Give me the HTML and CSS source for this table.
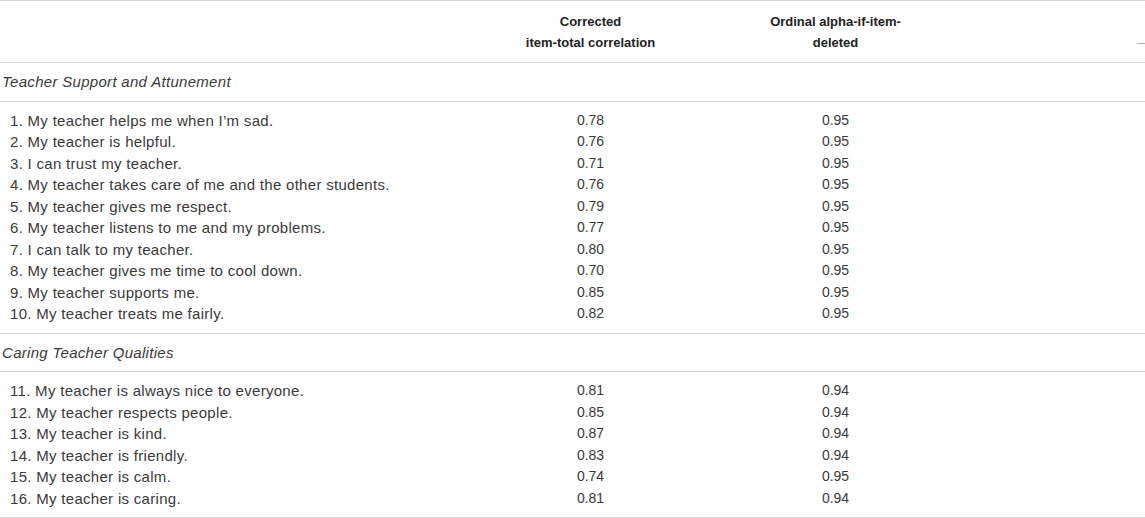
FILE: index.html
```html
<!DOCTYPE html>
<html lang="en">
<head>
<meta charset="utf-8">
<title>Item statistics</title>
<link rel="stylesheet" href="styles.css">
</head>
<body>
<div class="table">
  <div class="row head">
    <div class="c1"></div>
    <div class="c2"><span class="hd"><span class="ln">Corrected</span> <span class="ln">item-total correlation</span></span></div>
    <div class="c3"><span class="hd"><span class="ln">Ordinal alpha-if-item-</span><span class="ln">deleted</span></span></div>
    <div class="c4"><span class="tick"></span></div>
  </div>
  <div class="section"><em>Teacher Support and Attunement</em></div>
  <div class="group">
    <div class="row"><div class="c1">1. My teacher helps me when I’m sad.</div><div class="c2">0.78</div><div class="c3">0.95</div><div class="c4"></div></div>
    <div class="row"><div class="c1">2. My teacher is helpful.</div><div class="c2">0.76</div><div class="c3">0.95</div><div class="c4"></div></div>
    <div class="row"><div class="c1">3. I can trust my teacher.</div><div class="c2">0.71</div><div class="c3">0.95</div><div class="c4"></div></div>
    <div class="row"><div class="c1">4. My teacher takes care of me and the other students.</div><div class="c2">0.76</div><div class="c3">0.95</div><div class="c4"></div></div>
    <div class="row"><div class="c1">5. My teacher gives me respect.</div><div class="c2">0.79</div><div class="c3">0.95</div><div class="c4"></div></div>
    <div class="row"><div class="c1">6. My teacher listens to me and my problems.</div><div class="c2">0.77</div><div class="c3">0.95</div><div class="c4"></div></div>
    <div class="row"><div class="c1">7. I can talk to my teacher.</div><div class="c2">0.80</div><div class="c3">0.95</div><div class="c4"></div></div>
    <div class="row"><div class="c1">8. My teacher gives me time to cool down.</div><div class="c2">0.70</div><div class="c3">0.95</div><div class="c4"></div></div>
    <div class="row"><div class="c1">9. My teacher supports me.</div><div class="c2">0.85</div><div class="c3">0.95</div><div class="c4"></div></div>
    <div class="row"><div class="c1">10. My teacher treats me fairly.</div><div class="c2">0.82</div><div class="c3">0.95</div><div class="c4"></div></div>
  </div>
  <div class="section"><em>Caring Teacher Qualities</em></div>
  <div class="group">
    <div class="row"><div class="c1">11. My teacher is always nice to everyone.</div><div class="c2">0.81</div><div class="c3">0.94</div><div class="c4"></div></div>
    <div class="row"><div class="c1">12. My teacher respects people.</div><div class="c2">0.85</div><div class="c3">0.94</div><div class="c4"></div></div>
    <div class="row"><div class="c1">13. My teacher is kind.</div><div class="c2">0.87</div><div class="c3">0.94</div><div class="c4"></div></div>
    <div class="row"><div class="c1">14. My teacher is friendly.</div><div class="c2">0.83</div><div class="c3">0.94</div><div class="c4"></div></div>
    <div class="row"><div class="c1">15. My teacher is calm.</div><div class="c2">0.74</div><div class="c3">0.95</div><div class="c4"></div></div>
    <div class="row"><div class="c1">16. My teacher is caring.</div><div class="c2">0.81</div><div class="c3">0.94</div><div class="c4"></div></div>
  </div>
</div>
</body>
</html>
```
FILE: styles.css
```css
html, body {
  margin: 0;
  padding: 0;
  background: #ffffff;
}
body {
  font-family: "Liberation Sans", Arial, sans-serif;
  font-size: 14px;
  color: #3a3a3a;
}
.table {
  width: 1145px;
  border-top: 1px solid #d6d6d6;
}
.row {
  display: grid;
  grid-template-columns: 468px 245px 245px 1fr;
  line-height: 21.5px;
  height: 21.5px;
}
.row .c2, .row .c3 {
  text-align: center;
}
.row .c1 {
  padding-left: 10px;
  white-space: nowrap;
  font-size: 15px;
  letter-spacing: 0.3px;
}
.head {
  height: 61px;
  align-items: center;
  border-bottom: 1px solid #d6d6d6;
  line-height: 21px;
}
.head .hd {
  display: inline-block;
  padding-top: 1px;
  font-weight: bold;
  font-size: 13px;
  color: #222222;
}
.head .ln {
  display: block;
  white-space: nowrap;
}
.head .c4 {
  display: flex;
  justify-content: flex-end;
  align-self: start;
  padding-top: 42px;
}
.tick {
  width: 8px;
  height: 1px;
  background: #b0b0b0;
}
.section {
  height: 37.5px;
  line-height: 37.5px;
  padding-left: 2px;
  border-bottom: 1px solid #d6d6d6;
  font-size: 15px;
  letter-spacing: 0.3px;
  color: #3a3a3a;
}
.section em {
  font-style: italic;
}
.group {
  padding: 8px 0 8px;
  border-bottom: 1px solid #d6d6d6;
}
```
